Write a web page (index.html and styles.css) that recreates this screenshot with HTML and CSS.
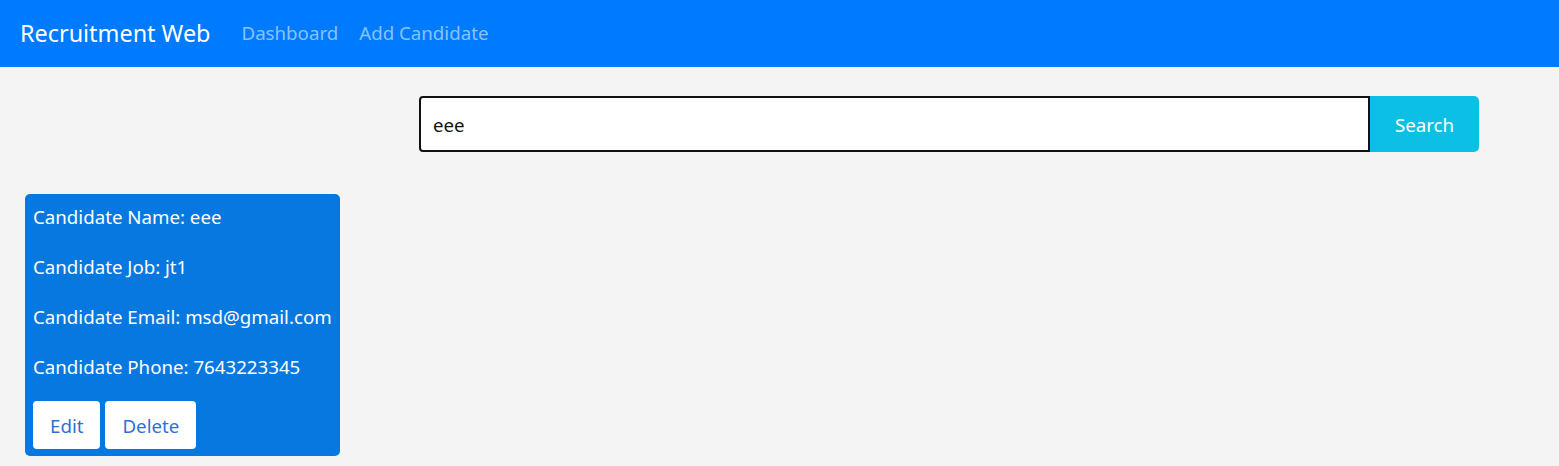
FILE: index.html
```html
<!DOCTYPE html>
<html>
<head>
<meta charset="utf-8">
<link rel="stylesheet" href="styles.css">
</head>
<body>
<nav class="navbar">
  <span class="brand">Recruitment Web</span>
  <a class="nav-link" href="#">Dashboard</a>
  <a class="nav-link" href="#">Add Candidate</a>
</nav>
<main class="content">
  <form class="search">
    <input class="search-input" type="text" value="eee">
    <button class="search-btn" type="button">Search</button>
  </form>
  <div class="cards">
    <div class="card">
      <p>Candidate Name: eee</p>
      <p>Candidate Job: jt1</p>
      <p>Candidate Email: msd@gmail.com</p>
      <p>Candidate Phone: 7643223345</p>
      <div class="actions">
        <button class="btn-white" type="button">Edit</button>
        <button class="btn-white" type="button">Delete</button>
      </div>
    </div>
  </div>
</main>
</body>
</html>
```
FILE: styles.css
```css
* { box-sizing: border-box; }
body {
  margin: 0;
  background: #f4f4f4;
  font-family: "Noto Sans", "Open Sans", sans-serif;
  color: #212529;
}
.navbar {
  height: 67px;
  background: #007bff;
  display: flex;
  align-items: center;
  padding: 0 20px 2px;
}
.brand {
  color: #fff;
  font-size: 23.4px;
  margin-right: 31px;
}
.nav-link {
  color: rgba(255,255,255,0.55);
  text-decoration: none;
  font-size: 18.7px;
  margin-right: 21px;
}
.content { padding-top: 29px; }
.search {
  display: flex;
  margin: 0 0 0 419px;
  width: 1060px;
  height: 56px;
}
.search-input {
  flex: 1;
  border: 2px solid #111;
  border-radius: 4px 0 0 4px;
  padding: 0 12px;
  font: inherit;
  font-size: 18.7px;
  color: #111;
  background: #fff;
  outline: none;
}
.search-btn {
  width: 109px;
  border: none;
  background: #0bc0e4;
  color: #fff;
  font: inherit;
  font-size: 18.7px;
  border-radius: 0 5px 5px 0;
}
.cards {
  display: flex;
  padding: 42px 0 0 25px;
}
.card {
  width: 315px;
  background: #0678e0;
  border-radius: 5px;
  padding: 9px 8px 7px;
  color: #fff;
  font-size: 18.7px;
}
.card p {
  margin: 0 0 22px;
  line-height: 28px;
  white-space: nowrap;
}
.actions {
  display: flex;
  gap: 5px;
  margin-top: -2px;
}
.btn-white {
  background: #fff;
  border: none;
  border-radius: 4px;
  height: 48px;
  padding: 0 17px;
  color: #2d6fd6;
  font: inherit;
  font-size: 18.7px;
}
```
